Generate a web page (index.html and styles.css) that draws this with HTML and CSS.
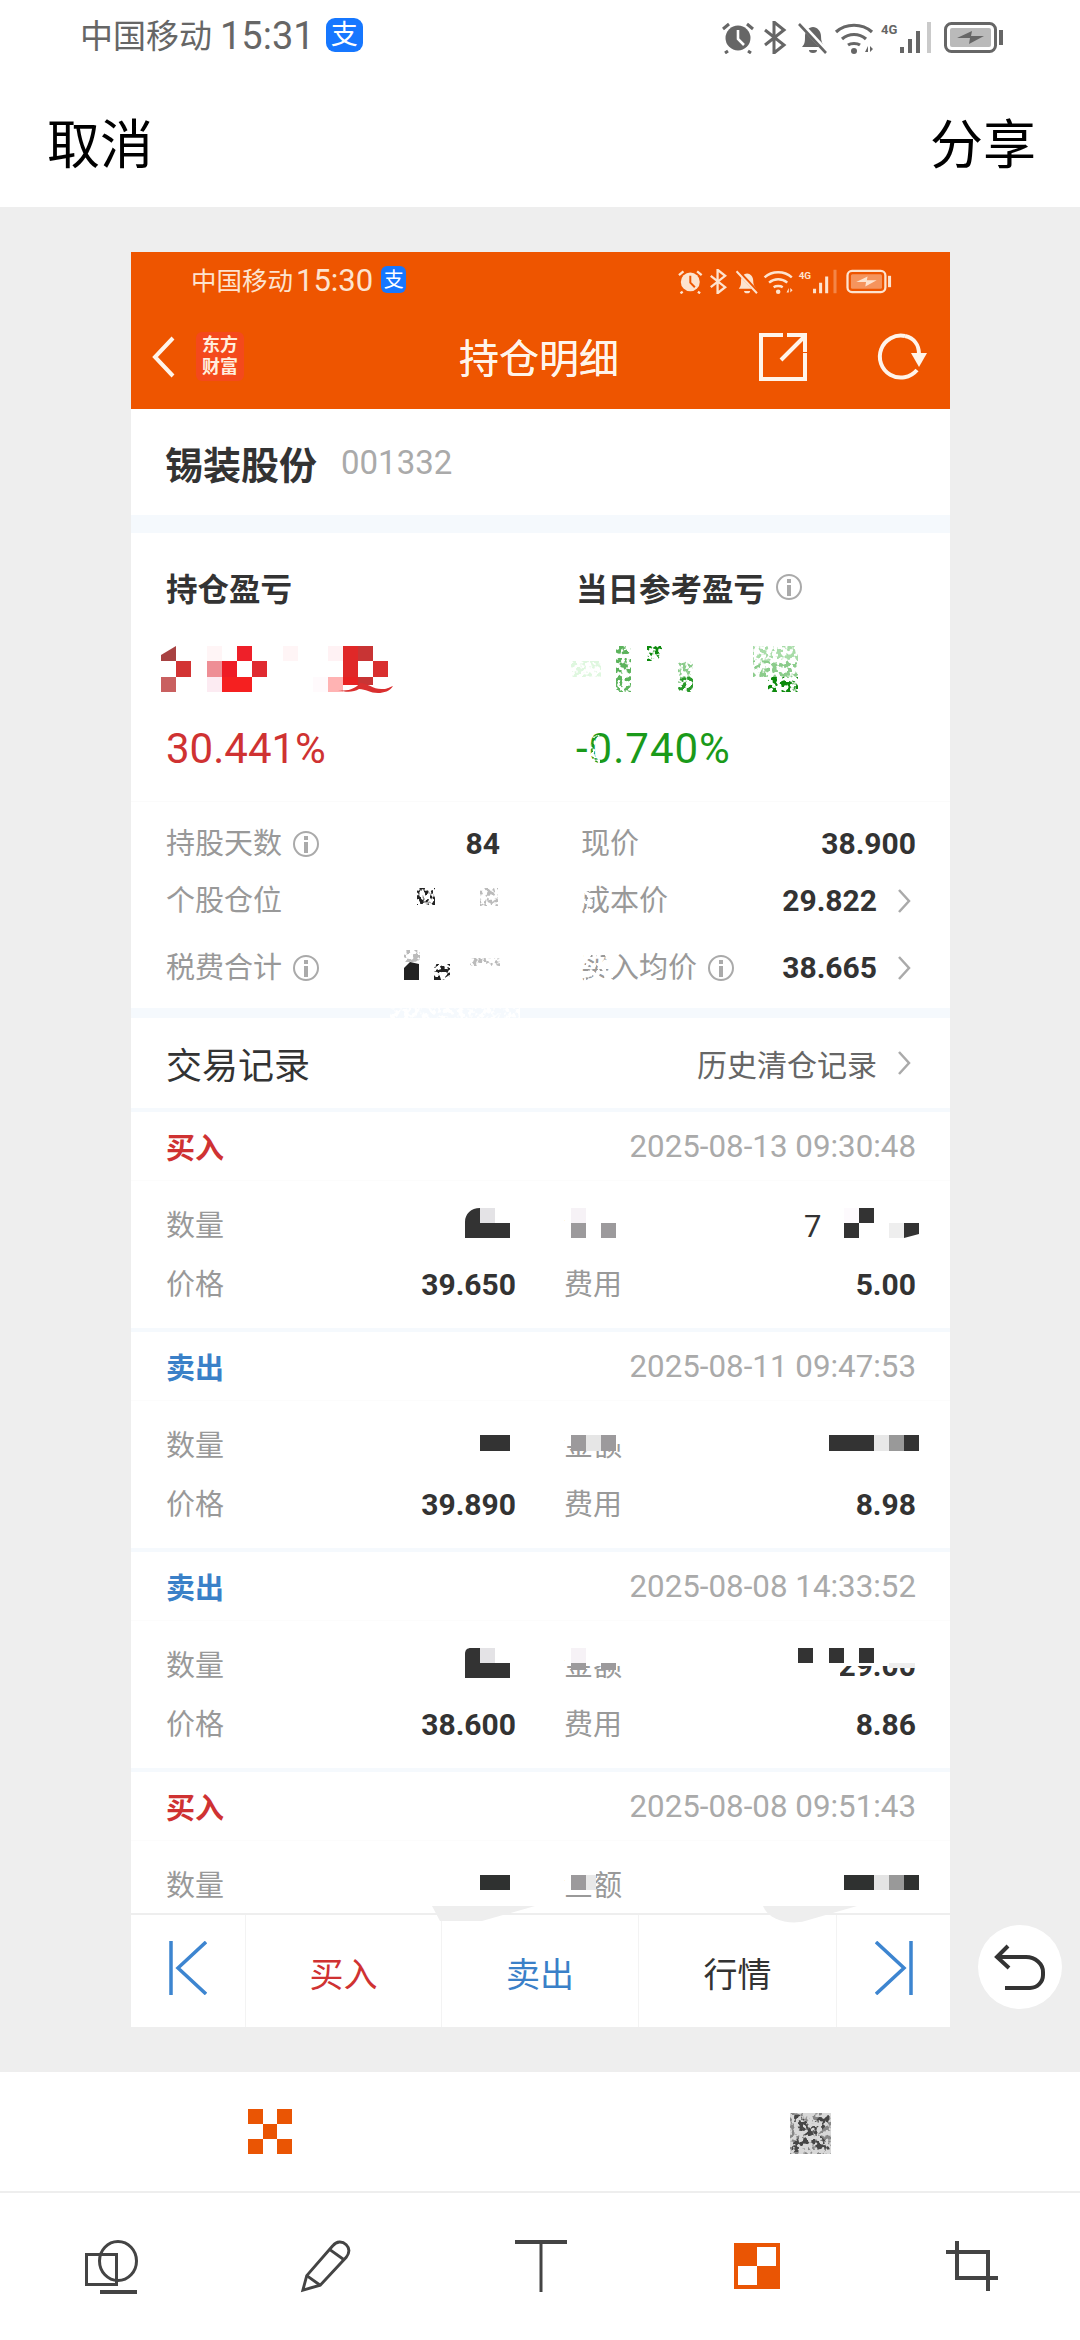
FILE: index.html
```html
<!DOCTYPE html>
<html lang="zh-CN">
<head>
<meta charset="utf-8">
<title>持仓明细</title>
<link rel="stylesheet" href="styles.css">
</head>
<body>
<svg class="defs" width="0" height="0" aria-hidden="true">
  <defs>
    <!-- status bar icon strip, shared by the device bar and the captured bar -->
    <symbol id="sys-icons" viewBox="0 0 282 33">
      <circle cx="16" cy="17" r="12.5" fill="currentColor"/>
      <path d="M16 9v9l6 6" fill="none" stroke="var(--sys-bg)" stroke-width="2.6"/>
      <path d="M1 8l6-5M31 8l-6-5M6 30l-3 2M26 30l3 2" fill="none" stroke="currentColor" stroke-width="3"/>
      <path d="M43 9l19 15-10 8V1l10 8-19 15" fill="none" stroke="currentColor" stroke-width="3"/>
      <path d="M80 26c3-3 3-6 3-11 0-5 4-9 8-9s8 4 8 9c0 5 1 8 4 11z" fill="currentColor"/>
      <path d="M87 29h8a4 3 0 0 1-8 0z" fill="currentColor"/>
      <path d="M77 1l29 31" fill="none" stroke="var(--sys-bg)" stroke-width="5"/>
      <path d="M77 3l27 29" fill="none" stroke="currentColor" stroke-width="2.6"/>
      <path d="M114 11c10-9 26-9 36 0M120 18c7-6 17-6 24 0M126 24c3-2 9-2 12 0" fill="none" stroke="currentColor" stroke-width="3.2"/>
      <circle cx="132" cy="30" r="3" fill="currentColor"/>
      <path d="M143 31l3-6v6zM148 25l3 3-3 3z" fill="currentColor"/>
      <text x="159" y="13" class="sys-net">4G</text>
      <path d="M178 26h4v6h-4zM186 18h4v14h-4zM194 10h4v22h-4z" fill="currentColor"/>
      <path d="M205 1h4v31h-4z" fill="currentColor" opacity=".35"/>
      <rect x="223.500" y="2.500" width="50" height="28" rx="6" fill="none" stroke="currentColor" stroke-width="3"/>
      <rect x="228" y="7" width="41" height="19" rx="2" fill="currentColor" opacity=".45"/>
      <path d="M277 9h4v15h-4z" fill="currentColor"/>
      <path d="M235 17l15-7-1 5h13l-15 8 1-6z" fill="currentColor"/>
    </symbol>
    <!-- blotchy mask for partly erased areas -->
    <filter id="blotch" x="0" y="0" width="100%" height="100%">
      <feTurbulence type="fractalNoise" baseFrequency="0.22" numOctaves="2" seed="7" result="noise"/>
      <feColorMatrix in="noise" type="matrix" values="0 0 0 0 0 0 0 0 0 0 0 0 0 0 0 0 0 0 9 -4.300" result="mask"/>
      <feComposite in="SourceGraphic" in2="mask" operator="in"/>
    </filter>
  </defs>
</svg>

<div class="phone">
  <header class="device-status">
    <span class="carrier">中国移动</span>
    <span class="clock">15:31</span>
    <span class="pay-badge">支</span>
    <svg class="sys-strip"><use href="#sys-icons"/></svg>
  </header>
  <nav class="editor-bar">
    <span>取消</span>
    <span>分享</span>
  </nav>

  <main class="stage">
    <article class="shot">
      <div class="shot-status">
        <span class="carrier">中国移动</span>
        <span class="clock">15:30</span>
        <span class="pay-badge">支</span>
        <svg class="sys-strip"><use href="#sys-icons"/></svg>
      </div>
      <div class="shot-nav">
        <div class="shot-nav-left">
          <svg class="nav-back" viewBox="0 0 24 42"><path d="M22 2L4 21l18 19"/></svg>
          <span class="brand">东方<br>财富</span>
        </div>
        <h1 class="shot-title">持仓明细</h1>
        <div class="shot-nav-right">
          <svg class="nav-icon" viewBox="0 0 48 48"><path d="M24 2H2v44h44V20M22 27L46 3M28 2h18v17"/></svg>
          <svg class="nav-icon nav-refresh" viewBox="0 0 54 50"><path d="M32 4a21 21 0 1 0 12 34"/><path class="fill" d="M38 21h16l-8 14z"/><path d="M32 4c9 2 14 9 14 18"/></svg>
        </div>
      </div>

      <section class="stock-head">
        <span class="stock-name">锡装股份</span>
        <span class="stock-code">001332</span>
      </section>
      <div class="band band-wide"></div>

      <section class="pnl">
        <div class="pnl-col">
          <div class="pnl-title">持仓盈亏</div>
          <div class="pnl-amount"></div>
          <div class="pnl-rate up">30.441%</div>
        </div>
        <div class="pnl-col">
          <div class="pnl-title">当日参考盈亏<i class="info"></i></div>
          <div class="pnl-amount"></div>
          <div class="pnl-rate down">-0.740%</div>
        </div>
      </section>

      <section class="metrics">
        <div class="metric-row">
          <div class="metric"><span class="label">持股天数<i class="info"></i></span><b class="num">84</b></div>
          <div class="metric"><span class="label">现价</span><b class="num">38.900</b></div>
        </div>
        <div class="metric-row">
          <div class="metric"><span class="label">个股仓位</span><b class="num"></b></div>
          <div class="metric"><span class="label">成本价</span><span class="num-link"><b class="num">29.822</b><svg class="chev" viewBox="0 0 14 26"><path d="M2 2l10 11L2 24"/></svg></span></div>
        </div>
        <div class="metric-row">
          <div class="metric"><span class="label">税费合计<i class="info"></i></span><b class="num"></b></div>
          <div class="metric"><span class="label">买入均价<i class="info"></i></span><span class="num-link"><b class="num">38.665</b><svg class="chev" viewBox="0 0 14 26"><path d="M2 2l10 11L2 24"/></svg></span></div>
        </div>
      </section>
      <div class="band band-mid"></div>

      <section class="trades-head">
        <span class="trades-title">交易记录</span>
        <span class="trades-link">历史清仓记录<svg class="chev" viewBox="0 0 14 26"><path d="M2 2l10 11L2 24"/></svg></span>
      </section>

      <section class="trades">
        <div class="trade">
          <div class="trade-head"><b class="side buy">买入</b><span class="stamp">2025-08-13 09:30:48</span></div>
          <div class="trade-grid">
            <span class="label">数量</span><b class="num"></b><span class="label">金额</span><b class="num"></b>
            <span class="label">价格</span><b class="num">39.650</b><span class="label">费用</span><b class="num">5.00</b>
          </div>
        </div>
        <div class="trade">
          <div class="trade-head"><b class="side sell">卖出</b><span class="stamp">2025-08-11 09:47:53</span></div>
          <div class="trade-grid">
            <span class="label">数量</span><b class="num"></b><span class="label">金额</span><b class="num"></b>
            <span class="label">价格</span><b class="num">39.890</b><span class="label">费用</span><b class="num">8.98</b>
          </div>
        </div>
        <div class="trade">
          <div class="trade-head"><b class="side sell">卖出</b><span class="stamp">2025-08-08 14:33:52</span></div>
          <div class="trade-grid">
            <span class="label">数量</span><b class="num"></b><span class="label">金额</span><b class="num">29.00</b>
            <span class="label">价格</span><b class="num">38.600</b><span class="label">费用</span><b class="num">8.86</b>
          </div>
        </div>
        <div class="trade">
          <div class="trade-head"><b class="side buy">买入</b><span class="stamp">2025-08-08 09:51:43</span></div>
          <div class="trade-grid">
            <span class="label">数量</span><b class="num"></b><span class="label">金额</span><b class="num"></b>
          </div>
        </div>
      </section>

      <footer class="trade-bar">
        <div class="bar-cell"><svg class="bar-jump" viewBox="0 0 38 54"><path d="M2 0v54M37 1L9 27l28 26"/></svg></div>
        <div class="bar-cell buy">买入</div>
        <div class="bar-cell sell">卖出</div>
        <div class="bar-cell">行情</div>
        <div class="bar-cell"><svg class="bar-jump" viewBox="0 0 38 54"><path d="M36 0v54M1 1l28 26L1 53"/></svg></div>
      </footer>

      <!-- hand-applied mosaic strokes lying over the captured page -->
      <svg class="mosaic" viewBox="131 252 819 1775">
        <path fill="#a84242" d="M161 655l15-9v15h-15z"/><rect x="176" y="661" width="15" height="16" fill="#d33434"/><rect x="161" y="677" width="15" height="15" fill="#c96060"/>
        <rect x="207" y="646" width="15" height="15" fill="#fff5f6"/><rect x="237" y="646" width="15" height="15" fill="#ee2029"/><rect x="207" y="661" width="15" height="16" fill="#ee8e95"/><rect x="222" y="661" width="15" height="16" fill="#ee1c25"/><rect x="252" y="661" width="15" height="16" fill="#e02a30"/><rect x="207" y="677" width="15" height="15" fill="#fcebf2"/><rect x="222" y="677" width="30" height="15" fill="#f52020"/>
        <rect x="283" y="646" width="15" height="15" fill="#fff5f6"/>
        <rect x="328" y="646" width="15" height="15" fill="#fff2f4"/><rect x="343" y="646" width="15" height="31" fill="#e02828"/><rect x="358" y="646" width="15" height="15" fill="#c83434"/><rect x="373" y="661" width="15" height="16" fill="#d92f2f"/><rect x="358" y="677" width="15" height="8" fill="#c83434"/><rect x="313" y="677" width="15" height="15" fill="#fffafc"/><rect x="328" y="677" width="15" height="15" fill="#ffb3b3"/><rect x="343" y="677" width="15" height="8" fill="#e82222"/>
        <path fill="#d92f2f" d="M338 690c10 2 18-2 22-7 8 0 14 7 23 6 5 0 6-2 10-3-3 5-9 7-15 7-8 0-12-4-19-4-5 3-12 4-21 1z"/>

        <g filter="url(#blotch)">
          <rect x="571" y="661" width="30" height="16" fill="#dff7df"/>
          <rect x="616" y="646" width="15" height="46" fill="#5cb35c"/>
          <rect x="647" y="646" width="15" height="15" fill="#0e8a0e"/>
          <rect x="678" y="677" width="15" height="15" fill="#2c9a2c"/>
          <rect x="678" y="661" width="15" height="16" fill="#8ccc8c"/>
          <rect x="753" y="646" width="45" height="15" fill="#a8dca8"/>
          <rect x="753" y="661" width="45" height="16" fill="#8ccc8c"/>
          <rect x="768" y="677" width="30" height="15" fill="#0e8a0e"/>
          <rect x="417" y="888" width="18" height="17" fill="#222"/>
          <rect x="480" y="888" width="18" height="18" fill="#bbb"/>
          <rect x="404" y="950" width="16" height="12" fill="#bbb"/>
          <rect x="434" y="964" width="16" height="16" fill="#222"/>
          <rect x="470" y="958" width="30" height="8" fill="#bbb"/>
          <rect x="581" y="885" width="12" height="32" fill="#fff"/>
          <rect x="581" y="950" width="32" height="34" fill="#fff"/>
          <rect x="590" y="735" width="10" height="28" fill="#fff"/>
          <rect x="390" y="1006" width="130" height="12" fill="#fff"/>
        </g>
        <path fill="#222" d="M404 980v-12l6-6 9 2v16z"/>

        <!-- first trade -->
        <rect x="565" y="1203" width="62" height="44" fill="#fff"/>
        <path fill="#333" d="M465 1238v-16c0-8 6-14 15-14v15h30v15z"/><rect x="480" y="1208" width="15" height="15" fill="#e4e3e6"/>
        <rect x="571" y="1208" width="15" height="15" fill="#f6f2f6"/><rect x="571" y="1223" width="15" height="15" fill="#9c9a9c"/><rect x="601" y="1223" width="15" height="15" fill="#9c9a9c"/>
        <text x="804" y="1237" class="mosaic-digit">7</text>
        <rect x="844" y="1208" width="15" height="15" fill="#fdfafd"/><rect x="859" y="1208" width="15" height="15" fill="#333"/><rect x="844" y="1223" width="15" height="15" fill="#333"/><rect x="889" y="1223" width="15" height="15" fill="#eee"/><path fill="#333" d="M904 1223h15v11l-15 4z"/>

        <!-- second trade -->
        <rect x="565" y="1425" width="62" height="19" fill="#fff"/>
        <rect x="480" y="1435" width="30" height="16" fill="#333"/>
        <rect x="571" y="1435" width="15" height="16" fill="#9c9a9c"/><rect x="586" y="1435" width="15" height="16" fill="#e6e6e6"/><rect x="601" y="1435" width="15" height="16" fill="#9c9a9c"/>
        <rect x="829" y="1435" width="45" height="16" fill="#333"/><rect x="874" y="1435" width="15" height="16" fill="#e8e8e8"/><rect x="889" y="1435" width="15" height="16" fill="#999"/><rect x="904" y="1435" width="15" height="16" fill="#333"/>

        <!-- third trade -->
        <rect x="565" y="1642" width="62" height="24" fill="#fff"/>
        <rect x="780" y="1645" width="140" height="21" fill="#fff"/><rect x="780" y="1666" width="60" height="12" fill="#fff"/>
        <path fill="#333" d="M465 1678v-24c0-4 2-6 6-6h9v15h30v15z"/><rect x="480" y="1648" width="15" height="15" fill="#e4e3e6"/>
        <rect x="571" y="1648" width="15" height="15" fill="#f6f2f6"/><rect x="571" y="1663" width="15" height="7" fill="#9c9a9c"/><rect x="601" y="1663" width="15" height="7" fill="#9c9a9c"/>
        <rect x="798" y="1648" width="15" height="15" fill="#333"/><rect x="829" y="1648" width="15" height="15" fill="#333"/><rect x="859" y="1648" width="15" height="15" fill="#333"/><rect x="889" y="1663" width="26" height="5" fill="#eee"/>

        <!-- fourth trade -->
        <rect x="565" y="1868" width="31" height="27" fill="#fff"/>
        <rect x="480" y="1875" width="30" height="15" fill="#2f3130"/>
        <rect x="571" y="1875" width="15" height="15" fill="#9c9a9c"/><rect x="586" y="1875" width="10" height="15" fill="#e8e8e8"/>
        <rect x="844" y="1875" width="30" height="15" fill="#2f3130"/><rect x="874" y="1875" width="15" height="15" fill="#e4e4e4"/><rect x="889" y="1875" width="15" height="15" fill="#999"/><rect x="904" y="1875" width="15" height="15" fill="#2f3130"/>

        <!-- stray strokes over the bottom bar -->
        <path fill="#eee" d="M432 1906h103l-53 15h-42z"/>
        <path fill="#eee" d="M763 1906h94l-52 15c-14 4-36 0-42-15z"/>
      </svg>
    </article>

    <button class="undo" type="button" aria-label="撤销">
      <svg viewBox="0 0 52 46"><path d="M14 2L3 13l12 11M3 13h29a17 15 0 0 1 17 15v3a13 13 0 0 1-13 13H11"/></svg>
    </button>
  </main>

  <section class="brushes">
    <svg class="brush" viewBox="0 0 44 45"><path fill="#ea5504" d="M0 0h15v15H0zM29 0h15v15H29zM15 15h14v15H15zM0 30h15v15H0zM29 30h15v15H29z"/></svg>
    <svg class="brush brush-noise" viewBox="0 0 41 41">
      <rect width="41" height="41" fill="#d8d8d8"/>
      <path d="M2 2l37 37M39 2L2 39" stroke="#4a4a4a" stroke-width="11" fill="none" filter="url(#blotch)"/>
      <rect width="41" height="41" fill="#444" filter="url(#blotch)" opacity=".55"/>
    </svg>
  </section>

  <section class="tools">
    <svg class="tool" viewBox="0 0 52 52"><path d="M1.500 14.500h30v30h-30z"/><ellipse cx="33" cy="21" rx="18.500" ry="19.500"/><path class="thick" d="M15 52h37"/></svg>
    <svg class="tool" viewBox="0 0 52 54"><path d="M2 52l4-15L33 6c4-5 10-5 14-1 4 4 3 9 0 13L20 47z"/><path d="M6 37l14 10M30 10l14 10"/></svg>
    <svg class="tool" viewBox="0 0 52 52"><path class="thick" d="M0 2h52"/><path d="M26 2v50"/></svg>
    <svg class="tool tool-active" viewBox="0 0 46 46"><path class="tile" d="M0 0h46v46H0z"/><path class="hole" d="M23 4h19v19H23zM4 23h19v19H4z"/></svg>
    <svg class="tool" viewBox="0 0 52 50"><path class="mid" d="M11 0v37h41M0 11h42v39"/></svg>
  </section>
</div>
</body>
</html>
```
FILE: styles.css
```css
* { box-sizing: border-box; }

html, body { margin: 0; padding: 0; }

body {
  background: #fff;
  font-family: Roboto, "Noto Sans CJK SC", sans-serif;
  color: #333;
}

.defs { position: absolute; }

.phone {
  width: 1080px;
  height: 2340px;
  display: flex;
  flex-direction: column;
  overflow: hidden;
}

/* status bars */
.device-status,
.shot-status {
  display: flex;
  align-items: center;
  flex: none;
}

.device-status {
  height: 74px;
  padding: 0 76px 0 80px;
  color: #666;
  --sys-bg: #fff;
}

.device-status .carrier { font-size: 33px; }
.device-status .clock { font-size: 38px; margin-left: 8px; }
.device-status .pay-badge { width: 37px; height: 34px; margin: -4px 0 0 11px; border-radius: 9px; font-size: 27px; }
.device-status .sys-strip { width: 282px; height: 33px; margin-left: auto; }

.shot-status {
  height: 58px;
  padding: 0 57px 0 60px;
  color: #fde3cf;
  --sys-bg: #ee5500;
}

.shot-status .carrier { font-size: 25.500px; }
.shot-status .clock { font-size: 31px; margin-left: 3px; }
.shot-status .pay-badge { width: 25px; height: 27px; margin: -3px 0 0 8px; border-radius: 6px; font-size: 20px; }
.shot-status .sys-strip { width: 216px; height: 25px; margin-left: auto; }

.carrier, .clock { line-height: 1.2; white-space: nowrap; }

.pay-badge {
  display: flex;
  align-items: center;
  justify-content: center;
  background: #1677ff;
  color: #fff;
  line-height: 1;
}

.sys-net {
  font: 700 13px Roboto, sans-serif;
  fill: currentColor;
}

/* editor title bar */
.editor-bar {
  height: 133px;
  flex: none;
  display: flex;
  align-items: center;
  justify-content: space-between;
  padding: 0 44px 0 47px;
  font-size: 53px;
  color: #000;
  background: #fff;
}

/* grey stage holding the captured page */
.stage {
  position: relative;
  flex: none;
  height: 1865px;
  padding: 45px 0 0 131px;
  background: #eee;
}

.shot {
  position: relative;
  width: 819px;
  height: 1775px;
  display: flex;
  flex-direction: column;
  overflow: hidden;
  background: #fff;
}

/* captured nav bar */
.shot-status, .shot-nav { background: #ee5500; }

.shot-nav {
  height: 99px;
  flex: none;
  display: grid;
  grid-template-columns: 1fr auto 1fr;
  align-items: center;
  padding: 0 23px 6px 20px;
  color: #fff4ea;
}

.shot-nav-left { display: flex; align-items: center; gap: 21px; }
.shot-nav-right { display: flex; align-items: center; justify-content: flex-end; gap: 66px; }

.nav-back { width: 24px; height: 42px; }
.nav-back path { fill: none; stroke: #fff4ea; stroke-width: 4; }

.brand {
  width: 48px;
  height: 49px;
  padding-top: 2px;
  border-radius: 6px;
  background: #f4491c;
  color: #ffeedd;
  font-size: 18px;
  font-weight: 700;
  line-height: 22px;
  text-align: center;
}

.shot-title {
  margin: 6px 0 0;
  font-size: 40px;
  font-weight: 400;
  line-height: 50px;
  text-shadow: 0 0 .5px #fff4ea;
}

.nav-icon { width: 48px; height: 48px; overflow: visible; }
.nav-icon path { fill: none; stroke: #fff4ea; stroke-width: 4; }
.nav-refresh { width: 54px; height: 50px; }
.nav-refresh path.fill { fill: #fff4ea; stroke: none; }

/* stock heading */
.stock-head {
  height: 106px;
  flex: none;
  display: flex;
  align-items: center;
  gap: 24px;
  padding: 0 34px;
}

.stock-name { font-size: 38px; font-weight: 700; color: #333; }
.stock-code { font-size: 33px; color: #aaa; }

.band { background: #f5f9fd; flex: none; }
.band-wide { height: 18px; }
.band-mid { height: 10px; }

/* profit and loss */
.pnl {
  flex: none;
  height: 268px;
  display: grid;
  grid-template-columns: 410px 1fr;
  padding: 37px 34px 0 35px;
}

.pnl-title {
  height: 34px;
  display: flex;
  align-items: center;
  font-size: 31.500px;
  font-weight: 700;
  color: #333;
}

.pnl-amount { height: 46px; margin: 42px 0 32px; }
.pnl-rate { font-size: 42px; line-height: 50px; }
.up { color: #cf3232; }
.down { color: #1a9a1a; letter-spacing: 1px; }

.info {
  position: relative;
  display: inline-block;
  flex: none;
  width: 26px;
  height: 26px;
  margin-left: 11px;
  border: 2px solid #aaa;
  border-radius: 50%;
}

.info::before {
  content: "";
  position: absolute;
  left: 9px;
  top: 9px;
  width: 4px;
  height: 11px;
  background: #aaa;
}

.info::after {
  content: "";
  position: absolute;
  left: 9px;
  top: 3px;
  width: 4px;
  height: 4px;
  background: #aaa;
}

/* holding metrics */
.metrics {
  flex: none;
  height: 207px;
  padding: 17px 34px 0 35px;
  border-top: 1px solid #fbfbfb;
}

.metric-row {
  height: 50px;
  display: grid;
  grid-template-columns: 334px 335px;
  column-gap: 81px;
  align-items: center;
}

.metric-row + .metric-row { margin-top: 7px; }
.metric-row + .metric-row + .metric-row { margin-top: 17px; }

.metric, .num-link {
  display: flex;
  align-items: center;
}

.metric { justify-content: space-between; }

.label {
  display: flex;
  align-items: center;
  font-size: 29px;
  color: #999;
  line-height: 50px;
  white-space: nowrap;
}

.num {
  font-size: 30px;
  font-weight: 700;
  color: #333;
  line-height: 50px;
  white-space: nowrap;
}

.chev {
  width: 14px;
  height: 26px;
  margin-left: 20px;
  margin-right: 5px;
  flex: none;
}

.chev path { fill: none; stroke: #aaa; stroke-width: 2.500; }

/* trade list */
.trades-head {
  flex: none;
  height: 90px;
  padding: 0 34px 0 35px;
  display: flex;
  align-items: center;
  justify-content: space-between;
}

.trades-title { font-size: 36px; color: #333; }
.trades-link { display: flex; align-items: center; font-size: 30px; color: #666; }
.trades-link .chev { margin-left: 20px; margin-right: 5px; }

.trades { flex: 1; min-height: 0; overflow: hidden; }

.trade {
  height: 220px;
  border-top: 4px solid #f5f9fd;
}

.trade-head {
  height: 69px;
  padding: 0 34px 0 35px;
  display: flex;
  align-items: center;
  justify-content: space-between;
  border-bottom: 1px solid #fcfcfc;
}

.side { font-size: 29px; font-weight: 700; }
.side.buy, .bar-cell.buy { color: #cf3232; }
.side.sell, .bar-cell.sell { color: #3a80c8; }

.stamp { font-size: 31.300px; color: #aaa; white-space: nowrap; }

.trade-grid {
  display: grid;
  grid-template-columns: 58px 292px 48px 58px 294px;
  grid-template-rows: 50px 50px;
  row-gap: 9px;
  padding: 20px 0 0 35px;
}

.trade-grid .label:nth-child(4n+3) { grid-column: 4; }
.trade-grid .num { text-align: right; }

/* bottom action bar of the captured page */
.trade-bar {
  flex: none;
  height: 114px;
  display: grid;
  grid-template-columns: 114px 196px 197px 198px 114px;
  border-top: 2px solid #eee;
  background: #fff;
}

.bar-cell {
  display: flex;
  align-items: center;
  justify-content: center;
  font-size: 34px;
  color: #333;
  border-left: 1px solid #f3f3f3;
  padding-top: 2px;
}

.bar-cell:first-child { border-left: 0; }
.bar-jump { width: 38px; height: 54px; margin-top: -8px; }
.bar-jump path { fill: none; stroke: #3d85d0; stroke-width: 3.500; }

/* mosaic strokes */
.mosaic {
  position: absolute;
  left: 0;
  top: 0;
  width: 819px;
  height: 1775px;
  pointer-events: none;
}

.mosaic-digit {
  font: 400 31px Roboto, sans-serif;
  fill: #333;
}

/* floating undo */
.undo {
  position: absolute;
  left: 978px;
  top: 1718px;
  width: 84px;
  height: 84px;
  padding: 0;
  border: 0;
  border-radius: 50%;
  background: #fff;
  display: flex;
  align-items: center;
  justify-content: center;
}

.undo svg { width: 52px; height: 46px; }
.undo path { fill: none; stroke: #333; stroke-width: 4; }

/* brush choices */
.brushes {
  flex: none;
  height: 121px;
  display: grid;
  grid-template-columns: 1fr 1fr;
  justify-items: center;
  align-items: center;
  border-bottom: 2px solid #eee;
}

.brush { width: 44px; height: 45px; }
.brush-noise { width: 41px; height: 41px; margin-top: 3px; }

/* tool row */
.tools {
  flex: 1;
  display: grid;
  grid-template-columns: repeat(5, 1fr);
  justify-items: center;
  align-items: center;
  padding: 0 0 2px 3px;
}

.tool { width: 52px; height: 52px; overflow: visible; }
.tool path, .tool ellipse { fill: none; stroke: #444; stroke-width: 3; }
.tool path.thick { stroke-width: 4; }
.tool path.mid { stroke-width: 4; }
.tool path.tile { fill: #ea5504; stroke: none; }
.tool path.hole { fill: #fff; stroke: none; }
.tool-active { width: 46px; height: 46px; }
```
